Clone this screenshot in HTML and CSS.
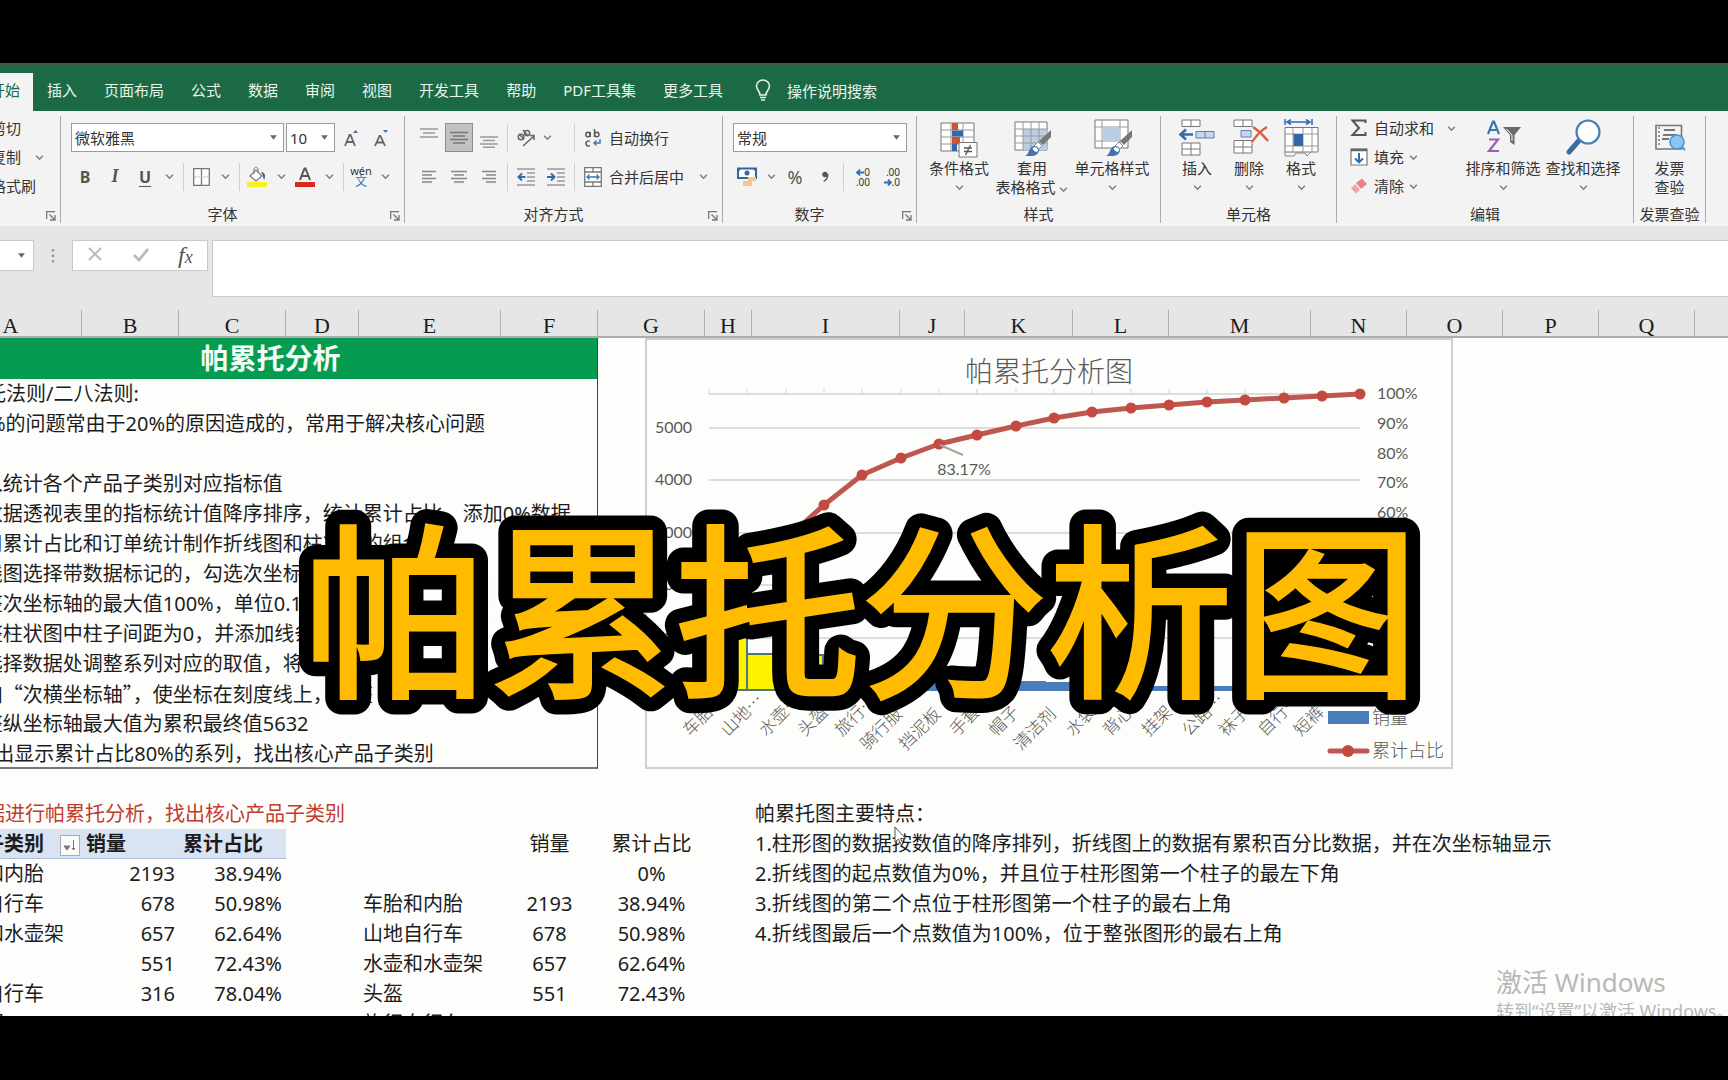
FILE: index.html
```html
<!DOCTYPE html>
<html lang="zh-CN">
<head>
<meta charset="utf-8">
<title>帕累托分析图</title>
<link rel="stylesheet" href="styles.css">
</head>
<body>
<svg class="defs" aria-hidden="true">
  <symbol id="chev" viewBox="0 0 8 6"><path d="M1 1.500 4 4.500 7 1.500" fill="none" stroke="#808080" stroke-width="1.400"/></symbol>
  <symbol id="tri" viewBox="0 0 8 6"><path d="M1 1H7L4 5Z" fill="#666"/></symbol>
  <symbol id="launch" viewBox="0 0 10 10"><path d="M.7 8V.7H9M3.500 3.500 8 8M9 4V9H4" fill="none" stroke="#777" stroke-width="1.300"/></symbol>
  <symbol id="brush" viewBox="0 0 28 28"><path d="M27 1V8L19 16 15 12Z" fill="#777"/><path d="M14 13l4 4-4 4-4-4Z" fill="#fff" stroke="#888"/><path d="M1 27C6 25 4 17 11 17c6 1 5 10-3 10Z" fill="#3f74ad"/><path d="M8 19c3-3 8 0 6 4-3 1-5-1-6-4Z" fill="#fff" stroke="#3f74ad"/></symbol>
</svg>
<div class="bar bar-top"></div>
<main class="stage">
<div class="window">
  <nav class="tabs">
    <button class="tab active">开始</button>
    <button class="tab">插入</button>
    <button class="tab">页面布局</button>
    <button class="tab">公式</button>
    <button class="tab">数据</button>
    <button class="tab">审阅</button>
    <button class="tab">视图</button>
    <button class="tab">开发工具</button>
    <button class="tab">帮助</button>
    <button class="tab">PDF工具集</button>
    <button class="tab">更多工具</button>
    <button class="tab tell"><svg width="16" height="22" viewBox="0 0 16 22"><path d="M5 16C5 12 1.500 11 1.500 7a6.500 6 0 0 1 13 0c0 4-3.500 5-3.500 9ZM5 18.500h6M6 21h4" fill="none" stroke="#e6f3ea" stroke-width="1.600"/></svg>操作说明搜索</button>
  </nav>

  <section class="ribbon">
    <div class="group g-clip">
      <div class="body stack">
        <button class="txt">剪切</button>
        <button class="txt wide">复制<svg class="cv"><use href="#chev"/></svg></button>
        <button class="txt">格式刷</button>
      </div>
      <div class="title launchable"><svg class="la"><use href="#launch"/></svg></div>
    </div>

    <div class="group g-font">
      <div class="body rows">
        <div class="row">
          <button class="combo name">微软雅黑<svg class="cv"><use href="#tri"/></svg></button>
          <button class="combo size">10<svg class="cv"><use href="#tri"/></svg></button>
          <button class="ic"><svg width="18" height="18" viewBox="0 0 18 18"><path d="M2 17 6.500 6h1L12 17M3.800 13h6.500" fill="none" stroke="#666" stroke-width="1.800"/><path d="M10 4 12.500 1 15 4Z" fill="#3f74ad"/></svg></button>
          <button class="ic"><svg width="18" height="18" viewBox="0 0 18 18"><path d="M2 17 6.500 7h1L12 17M3.800 13.500h6.500" fill="none" stroke="#666" stroke-width="1.800"/><path d="M10 1h5L12.500 4Z" fill="#3f74ad"/></svg></button>
        </div>
        <div class="row">
          <button class="ic b">B</button><button class="ic i">I</button><button class="ic u">U</button>
          <button class="dd"><svg class="cv"><use href="#chev"/></svg></button><i class="sep s1"></i>
          <button class="ic"><svg width="17" height="18" viewBox="0 0 17 18"><path d="M.7.700H16.300V17.300H.7ZM8.500 1V17" fill="#fff" stroke="#777" stroke-width="1.300"/><path d="M2 9H15" stroke="#999" stroke-dasharray="1.500 1.500"/></svg></button>
          <button class="dd"><svg class="cv"><use href="#chev"/></svg></button><i class="sep s1"></i>
          <button class="ic"><svg width="22" height="22" viewBox="0 0 22 22"><path d="M4 10 10 4l6 6-6 5Z" fill="#fff" stroke="#777" stroke-width="1.200"/><path d="M8 8V3c0-2 4-2 4 0v4" fill="none" stroke="#777"/><path d="M15 6c4 0 5 4 3 8-1-3-1-5-3-8Z" fill="#3f5f8d"/><path d="M1 16H21V21H1Z" fill="#f7f01d"/></svg></button>
          <button class="dd"><svg class="cv"><use href="#chev"/></svg></button>
          <button class="ic"><svg width="20" height="20" viewBox="0 0 20 20"><path d="M5 13 9.500 1.500h1L15 13M6.500 9h7" fill="none" stroke="#555" stroke-width="2"/><path d="M0 15H20V20H0Z" fill="#d92a1c"/></svg></button>
          <button class="dd"><svg class="cv"><use href="#chev"/></svg></button><i class="sep s1"></i>
          <button class="ic wen"><span>wén</span><span class="hanzi">文</span></button>
          <button class="dd"><svg class="cv"><use href="#chev"/></svg></button>
        </div>
      </div>
      <div class="title launchable">字体<svg class="la"><use href="#launch"/></svg></div>
    </div>

    <div class="group g-align">
      <div class="body rows">
        <div class="row">
          <button class="ic up"><svg width="18" height="10" viewBox="0 0 18 10"><path d="M0 1H18M3 5H15M0 9H18" stroke="#999" stroke-width="1.500"/></svg></button>
          <button class="ic on"><svg width="18" height="13" viewBox="0 0 18 13"><path d="M0 1.500H18M3 5H15M0 8.500H18M3 12H15" stroke="#777" stroke-width="1.400"/></svg></button>
          <button class="ic down"><svg width="18" height="12" viewBox="0 0 18 12"><path d="M0 1H18M3 4.500H15M0 8H18M3 11.300H15" stroke="#999" stroke-width="1.400"/></svg></button>
          <i class="sep"></i>
          <span class="pair"><button class="ic"><svg width="20" height="20" viewBox="0 0 20 20"><g fill="none" stroke="#666" stroke-width="1.500"><circle cx="5" cy="9" r="2.800"/><path d="M3 6 8 11M7 2l5 6"/><circle cx="11" cy="5" r="2.600"/><path d="M7 18 18 8M18 12V7.500H13.500"/></g></svg></button><button class="dd slim"><svg class="cv"><use href="#chev"/></svg></button></span>
          <i class="sep"></i>
          <button class="txt"><span class="ic"><svg width="18" height="20" viewBox="0 0 18 20"><g fill="none" stroke="#555" stroke-width="1.400"><circle cx="4" cy="6.500" r="2.200"/><path d="M6.300 4v5M10.500 1v8"/><circle cx="12.800" cy="6.500" r="2.200"/><path d="M6 13.500a2.500 2.500 0 1 0 0 4"/></g><path d="M16 11v4H10M12.500 12.500 10 15l2.500 2.500" fill="none" stroke="#3f74ad" stroke-width="1.400"/></svg></span>自动换行</button>
        </div>
        <div class="row">
          <button class="ic"><svg width="14" height="14" viewBox="0 0 14 14"><path d="M0 1.500H14M0 5H10M0 8.500H14M0 12H10" stroke="#888" stroke-width="1.400"/></svg></button>
          <button class="ic"><svg width="16" height="14" viewBox="0 0 16 14"><path d="M0 1.500H16M3 5H13M0 8.500H16M3 12H13" stroke="#888" stroke-width="1.400"/></svg></button>
          <button class="ic"><svg width="14" height="14" viewBox="0 0 14 14"><path d="M0 1.500H14M4 5H14M0 8.500H14M4 12H14" stroke="#888" stroke-width="1.400"/></svg></button>
          <i class="sep"></i>
          <button class="ic"><svg width="18" height="18" viewBox="0 0 18 18"><path d="M0 1H18M10 5H18M10 9H18M10 13H18M0 17H18" stroke="#999" stroke-width="1.400"/><path d="M8.500 9H2M5 5.500 1.500 9 5 12.500" fill="none" stroke="#2f6cb0" stroke-width="2"/></svg></button>
          <button class="ic"><svg width="18" height="18" viewBox="0 0 18 18"><path d="M0 1H18M10 5H18M10 9H18M10 13H18M0 17H18" stroke="#999" stroke-width="1.400"/><path d="M0 9H7M4 5.500 7.500 9 4 12.500" fill="none" stroke="#2f6cb0" stroke-width="2"/></svg></button>
          <i class="sep"></i>
          <button class="txt merge"><span class="ic"><svg width="18" height="20" viewBox="0 0 18 20"><path d="M.7.700H17.300V19.300H.7ZM.7 5H17.300M.7 15H17.300M9 1V5M9 15v4" fill="#fff" stroke="#777" stroke-width="1.300"/><path d="M3 10H15M5.500 7.500 3 10l2.500 2.500M12.500 7.500 15 10l-2.500 2.500" fill="none" stroke="#3f74ad" stroke-width="1.300"/></svg></span>合并后居中<svg class="cv"><use href="#chev"/></svg></button>
        </div>
      </div>
      <div class="title launchable">对齐方式<svg class="la"><use href="#launch"/></svg></div>
    </div>

    <div class="group g-num">
      <div class="body rows">
        <div class="row"><button class="combo fmt">常规<svg class="cv"><use href="#tri"/></svg></button></div>
        <div class="row">
          <button class="ic"><svg width="20" height="20" viewBox="0 0 20 20"><path d="M1 1.500H19V11H1Z" fill="#fff" stroke="#33689f" stroke-width="2"/><path d="M1 1h4L1 5ZM19 1v4l-4-4Z" fill="#33689f"/><circle cx="10" cy="6" r="2.500" fill="#33689f"/><path d="M11 10h8v4h-8ZM6 14h9v5H6Z" fill="#f6c68d"/></svg></button>
          <button class="dd"><svg class="cv"><use href="#chev"/></svg></button>
          <button class="ic pct">%</button>
          <button class="ic"><svg width="8" height="12" viewBox="0 0 8 12"><circle cx="4" cy="3.500" r="2.700" fill="#555"/><path d="M6.700 3c.3 4-1.500 6-4 7.500" fill="none" stroke="#555" stroke-width="1.400"/></svg></button>
          <i class="sep"></i>
          <button class="ic dec"><span><svg width="8" height="7" viewBox="0 0 8 7"><path d="M8 3.500H1M4 .7 1 3.500 4 6.300" fill="none" stroke="#2f6cb0" stroke-width="1.800"/></svg>0</span><span>.00</span></button>
          <button class="ic dec"><span>.00</span><span><svg width="8" height="7" viewBox="0 0 8 7"><path d="M0 3.500H7M4 .7 7 3.500 4 6.300" fill="none" stroke="#2f6cb0" stroke-width="1.800"/></svg>.0</span></button>
        </div>
      </div>
      <div class="title launchable">数字<svg class="la"><use href="#launch"/></svg></div>
    </div>

    <div class="group g-style">
      <div class="body bigs">
        <button class="big w1"><svg class="bi" viewBox="0 0 40 40"><path d="M2 4H35V32H2Z" fill="#fff" stroke="#777"/><path d="M2 11H35M2 18H35M2 25H35M12 4V32M24 4V32" stroke="#999" fill="none"/><path d="M13 4h6v7h-6ZM13 18h8v7h-8Z" fill="#d1542f"/><path d="M13 11.500H24V17.500H13ZM13 25h5v7h-5Z" fill="#3567a8"/><path d="M20 23.500H38V38H20Z" fill="#fff" stroke="#777"/><path d="M25 29h8M25 32.500h8M31.500 26 26.500 36" stroke="#555" stroke-width="1.300"/></svg><span>条件格式</span><svg class="cv"><use href="#chev"/></svg></button>
        <button class="big w2"><svg class="bi" viewBox="0 0 40 40"><path d="M3 3H35V31H3Z" fill="#fff" stroke="#777"/><path d="M11 10H35V31H11Z" fill="#bccde6"/><path d="M3 10H35M3 17H35M3 24H35M11 3V31M19 3V31M27 3V31" stroke="#999" fill="none"/><use href="#brush" x="12" y="10" width="28" height="28"/></svg><span>套用</span><span>表格格式 <svg class="cv"><use href="#chev"/></svg></span></button>
        <button class="big w3"><svg class="bi" viewBox="0 0 40 40"><path d="M3 1H36V29H3Z" fill="#fff" stroke="#777"/><path d="M3 8H36M3 22H36M10 1V29M28 1V29" stroke="#999" fill="none"/><path d="M10.500 8.500H27.500V21.500H10.500Z" fill="#bccde6"/><use href="#brush" x="13" y="10" width="28" height="28"/></svg><span>单元格样式</span><svg class="cv"><use href="#chev"/></svg></button>
      </div>
      <div class="title">样式</div>
    </div>

    <div class="group g-cell">
      <div class="body bigs">
        <button class="big w4"><svg class="bi" viewBox="0 0 40 40"><path d="M5 1H23V7.500H5ZM14 1V7.500M5 24H23V36H5ZM5 30H23M14 24V36" fill="#fff" stroke="#777"/><path d="M19 12.500H37V19H19ZM28 12.500V19" fill="#c7d6ec" stroke="#6480a8"/><path d="M16 15.500H4M9 10.500 3.500 15.500 9 20.500" fill="none" stroke="#2f6cb0" stroke-width="2.600"/></svg><span>插入</span><svg class="cv"><use href="#chev"/></svg></button>
        <button class="big w4"><svg class="bi" viewBox="0 0 40 40"><path d="M5 1H23V7.500H5ZM14 1V7.500M5 21.500H23V34H5ZM5 28H23M14 21.500V34" fill="#fff" stroke="#777"/><path d="M12 11.500H22V18H12Z" fill="#c7d6ec" stroke="#6480a8"/><path d="M24 8C30 12 35 17 39 22M38 8C31 12 27 17 23 23" fill="none" stroke="#dc5b3c" stroke-width="2.200"/></svg><span>删除</span><svg class="cv"><use href="#chev"/></svg></button>
        <button class="big w4"><svg class="bi" viewBox="0 0 40 40"><path d="M4 0V6M31 0V6M6 3H29M10 .5 6 3l4 2.500M25 .500 29 3l-4 2.500" fill="none" stroke="#2f6cb0" stroke-width="1.500"/><path d="M4 8.500H37V33H4Z" fill="#fff" stroke="#777"/><path d="M4 15H37M4 27H37M12 9V33M22 9V33M31 9V33" stroke="#999"/><path d="M12.500 15H22V27H12.500Z" fill="#3567a8"/><path d="M4 33v4h9l2-3h9l2 3 4-4" fill="none" stroke="#888"/></svg><span>格式</span><svg class="cv"><use href="#chev"/></svg></button>
      </div>
      <div class="title">单元格</div>
    </div>

    <div class="group g-edit">
      <div class="body bigs">
        <div class="stack edits">
          <button class="txt far"><svg width="18" height="18" viewBox="0 0 18 18"><path d="M15.500 4V1.500H2.500L9 9 2.500 16H15.500V13" fill="none" stroke="#555" stroke-width="2"/></svg>自动求和<svg class="cv"><use href="#chev"/></svg></button>
          <button class="txt"><svg width="18" height="18" viewBox="0 0 18 18"><path d="M1 1H17V17H1Z" fill="#fff" stroke="#777" stroke-width="1.200"/><path d="M1 2H17" stroke="#666" stroke-width="2.500"/><path d="M9 5V14M5 10.500 9 14.300 13 10.500" fill="none" stroke="#2f6cb0" stroke-width="2"/></svg>填充<svg class="cv"><use href="#chev"/></svg></button>
          <button class="txt"><svg width="18" height="18" viewBox="0 0 18 18"><path d="M6 6 12 1.500 17 7 11 12Z" fill="#e8808d"/><path d="M5 7 10 13 6 16.500 1 11.500Z" fill="#f0a3ac"/></svg>清除<svg class="cv"><use href="#chev"/></svg></button>
        </div>
        <button class="big w5"><svg class="bi" viewBox="0 0 40 40"><path d="M5 15 10 2.500h1L16 15M7 11h7" fill="none" stroke="#3a78b4" stroke-width="2.200"/><path d="M6 20.500H15L6 32H16" fill="none" stroke="#9a62b5" stroke-width="2.200"/><path d="M20 8H38L31.500 16V26L27 23V16Z" fill="#6b6b6b"/><path d="M23.500 10 29 16v6" fill="none" stroke="#fff"/></svg><span>排序和筛选</span><svg class="cv"><use href="#chev"/></svg></button>
        <button class="big w5"><svg class="bi" viewBox="0 0 40 40"><path d="M16.500 21 6 33" stroke="#3b6c9c" stroke-width="5" stroke-linecap="round"/><circle cx="25" cy="13" r="11.500" fill="#fff" stroke="#4781b8" stroke-width="2.200"/></svg><span>查找和选择</span><svg class="cv"><use href="#chev"/></svg></button>
      </div>
      <div class="title">编辑</div>
    </div>

    <div class="group g-inv">
      <div class="body bigs">
        <button class="big w6"><svg class="bi" viewBox="0 0 40 40"><path d="M6 6.500H31.500V30H6Z" fill="#f4f4f4" stroke="#777" stroke-width="1.600"/><path d="M9 8v20" stroke="#777" stroke-width="1.500" stroke-dasharray="2 2"/><path d="M14 11H25M13 16H27M12 20H19" stroke="#777" stroke-width="1.800"/><circle cx="27" cy="23" r="7" fill="#8ec4f2" stroke="#4b95d4" stroke-width="1.600"/><path d="m32 28 3 3" stroke="#4b95d4" stroke-width="2"/></svg><span>发票</span><span>查验</span></button>
      </div>
      <div class="title">发票查验</div>
    </div>
  </section>

  <section class="formula">
    <button class="namebox" aria-label="名称框"><svg class="cv"><use href="#tri"/></svg></button>
    <svg class="dots" width="4" height="16" viewBox="0 0 4 16"><path d="M2 1V15" stroke="#999" stroke-width="2.500" stroke-dasharray="2.500 3"/></svg>
    <div class="fx">
      <button aria-label="取消"><svg width="16" height="16" viewBox="0 0 16 16"><path d="M2 2 14 14M14 2 2 14" stroke="#bbb" stroke-width="2"/></svg></button>
      <button aria-label="输入"><svg width="18" height="16" viewBox="0 0 18 16"><path d="M2 9 7 14 16 3" fill="none" stroke="#bbb" stroke-width="2.800"/></svg></button>
      <button class="fn"><span>f</span>x</button>
    </div>
    <input class="finput" aria-label="编辑栏">
  </section>

  <div class="cols"><span>A</span><span>B</span><span>C</span><span>D</span><span>E</span><span>F</span><span>G</span><span>H</span><span>I</span><span>J</span><span>K</span><span>L</span><span>M</span><span>N</span><span>O</span><span>P</span><span>Q</span><span></span></div>

  <section class="sheet">
    <div class="upper">
      <div class="panel">
        <h1>帕累托分析</h1>
        <p>帕累托法则/二八法则:</p>
        <p>即80%的问题常由于20%的原因造成的，常用于解决核心问题</p>
        <p></p>
        <p>1.插入统计各个产品子类别对应指标值</p>
        <p>2.对数据透视表里的指标统计值降序排序，统计累计占比，添加0%数据</p>
        <p>3.利用累计占比和订单统计制作折线图和柱状图的组合图</p>
        <p>4.折线图选择带数据标记的，勾选次坐标轴</p>
        <p>5.调整次坐标轴的最大值100%，单位0.1</p>
        <p>6.调整柱状图中柱子间距为0，并添加线条</p>
        <p>7.在选择数据处调整系列对应的取值，将折线图取值</p>
        <p>8.添加<span class="q">“</span>次横坐标轴<span class="q">”</span>，使坐标在刻度线上，调整</p>
        <p>9.调整纵坐标轴最大值为累积最终值5632</p>
        <p>10.突出显示累计占比80%的系列，找出核心产品子类别</p>
      </div>
      <svg class="chart" viewBox="646 339 807 430" role="img" aria-label="帕累托分析图">
        <rect x="646" y="339" width="806" height="429" fill="#fdfefc" stroke="#cfcfcf" stroke-width="2"/>
        <path d="M709 394H1360M709 428H1360M709 480H1360M709 533H1360M709 585H1360M709 638H1360" stroke="#dcdcdc" stroke-width="2"/>
        <path d="M709 389v5M747 389v5M786 389v5M824 389v5M862 389v5M901 389v5M939 389v5M977 389v5M1016 389v5M1054 389v5M1092 389v5M1131 389v5M1169 389v5M1207 389v5M1245 389v5M1284 389v5M1322 389v5" stroke="#cfd3d6"/>
        <path d="M709 575H747V690H709ZM747 654H785V690H747ZM785 655H823V690H785Z" fill="#fff200" stroke="#4a7a78" stroke-width="2"/>
        <path d="M823 661H862V673H901V675H939V681H1046V682H1092V684H1131V686H1245V688H1360V691H823Z" fill="#4a7ebb"/>
        <path d="M709 690 747 574 786 539 824 505 862 475 901 458 939 444 977 435 1016 426 1054 418 1092 412 1131 408 1169 405 1207 402 1245 400 1284 398 1322 396 1360 394" fill="none" stroke="#bd5750" stroke-width="5" stroke-linejoin="round"/>
        <g fill="#c24a40"><circle cx="709" cy="690" r="5.500"/><circle cx="747" cy="574" r="5.500"/><circle cx="786" cy="539" r="5.500"/><circle cx="824" cy="505" r="5.500"/><circle cx="862" cy="475" r="5.500"/><circle cx="901" cy="458" r="5.500"/><circle cx="939" cy="444" r="5.500"/><circle cx="977" cy="435" r="5.500"/><circle cx="1016" cy="426" r="5.500"/><circle cx="1054" cy="418" r="5.500"/><circle cx="1092" cy="412" r="5.500"/><circle cx="1131" cy="408" r="5.500"/><circle cx="1169" cy="405" r="5.500"/><circle cx="1207" cy="402" r="5.500"/><circle cx="1245" cy="400" r="5.500"/><circle cx="1284" cy="398" r="5.500"/><circle cx="1322" cy="396" r="5.500"/><circle cx="1360" cy="394" r="5.500"/></g>
        <path d="M940 445 963 455" stroke="#a9a29c" stroke-width="2"/>
        <text class="ct" x="1049" y="382" text-anchor="middle">帕累托分析图</text>
        <g class="num" text-anchor="end"><text x="692" y="433">5000</text><text x="692" y="485">4000</text><text x="692" y="538">3000</text><text x="692" y="590">2000</text><text x="692" y="643">1000</text><text x="692" y="696">0</text></g>
        <g class="num"><text x="1377" y="399">100%</text><text x="1377" y="429">90%</text><text x="1377" y="459">80%</text><text x="1377" y="488">70%</text><text x="1377" y="518">60%</text></g>
        <text class="num" x="964" y="475" text-anchor="middle">83.17%</text>
        <g class="cat">
          <text transform="translate(690 737) rotate(-45)">车胎…</text><text transform="translate(728 737) rotate(-45)">山地…</text><text transform="translate(766 737) rotate(-45)">水壶…</text><text transform="translate(805 737) rotate(-45)">头盔</text><text transform="translate(842 737) rotate(-45)">旅行…</text><text transform="translate(867 751) rotate(-45)">骑行服</text><text transform="translate(906 751) rotate(-45)">挡泥板</text><text transform="translate(957 737) rotate(-45)">手套</text><text transform="translate(996 737) rotate(-45)">帽子</text><text transform="translate(1021 751) rotate(-45)">清洁剂</text><text transform="translate(1073 737) rotate(-45)">水袋</text><text transform="translate(1110 737) rotate(-45)">背心</text><text transform="translate(1149 737) rotate(-45)">挂架</text><text transform="translate(1189 737) rotate(-45)">公路…</text><text transform="translate(1226 737) rotate(-45)">袜子</text><text transform="translate(1265 737) rotate(-45)">自行…</text><text transform="translate(1301 737) rotate(-45)">短裤</text>
        </g>
        <path d="M1328 711H1369V724H1328Z" fill="#4a7ebb"/>
        <path d="M1330 751H1367" stroke="#bd5750" stroke-width="5" stroke-linecap="round"/><circle cx="1348" cy="751" r="6" fill="#c24a40"/>
        <g class="leg"><text x="1372" y="724">销量</text><text x="1372" y="757">累计占比</text></g>
      </svg>
    </div>

    <div class="lower">
      <div class="pivot">
        <p class="red">对数据进行帕累托分析，找出核心产品子类别</p>
        <table>
          <thead><tr><th class="ca"><span class="hd">产品子类别<button class="filter" aria-label="排序"><svg width="14" height="12" viewBox="0 0 14 12"><path d="M1 6H7L4 10ZM10.500 0V10M9 8l1.500 2L12 8" fill="#777" stroke="#777"/></svg></button></span></th><th class="cb">销量</th><th class="cc">累计占比</th></tr></thead>
          <tbody>
            <tr><td>车胎和内胎</td><td>2193</td><td>38.94%</td></tr>
            <tr><td>山地自行车</td><td>678</td><td>50.98%</td></tr>
            <tr><td>水壶和水壶架</td><td>657</td><td>62.64%</td></tr>
            <tr><td>头盔</td><td>551</td><td>72.43%</td></tr>
            <tr><td>旅行自行车</td><td>316</td><td>78.04%</td></tr>
            <tr><td>骑行服</td><td>289</td><td>83.17%</td></tr>
          </tbody>
        </table>
      </div>
      <table class="calc">
        <thead><tr><th class="ca"></th><th class="cb">销量</th><th class="cc">累计占比</th></tr></thead>
        <tbody>
          <tr><td></td><td></td><td>0%</td></tr>
          <tr><td>车胎和内胎</td><td>2193</td><td>38.94%</td></tr>
          <tr><td>山地自行车</td><td>678</td><td>50.98%</td></tr>
          <tr><td>水壶和水壶架</td><td>657</td><td>62.64%</td></tr>
          <tr><td>头盔</td><td>551</td><td>72.43%</td></tr>
          <tr><td>旅行自行车</td><td>316</td><td>78.04%</td></tr>
        </tbody>
      </table>
      <div class="notes">
        <p>帕累托图主要特点：</p>
        <p>1.柱形图的数据按数值的降序排列，折线图上的数据有累积百分比数据，并在次坐标轴显示</p>
        <p>2.折线图的起点数值为0%，并且位于柱形图第一个柱子的最左下角</p>
        <p>3.折线图的第二个点位于柱形图第一个柱子的最右上角</p>
        <p>4.折线图最后一个点数值为100%，位于整张图形的最右上角</p>
        <svg class="cursor" width="13" height="20" viewBox="0 0 13 20"><path d="M1 1V16L4.500 13 7 18.500 9 17.500 6.500 12.500H11.500Z" fill="#fff" stroke="#555"/></svg>
      </div>
    </div>
  </section>
</div>
<div class="watermark"><div class="wm1">激活 Windows</div><div class="wm2">转到“设置”以激活 Windows。</div></div>
<svg class="caption" viewBox="0 0 1160 240" width="1160" height="240">
  <g class="outline"><text id="cap" x="577" y="183" text-anchor="middle">帕累托分析图</text></g>
  <g class="face"><use href="#cap"/></g>
</svg>
</main>
<div class="bar bar-bottom"></div>
</body>
</html>
```
FILE: styles.css
```css
* { box-sizing: border-box; }
html, body { margin: 0; height: 100%; }
body {
  display: flex; flex-direction: column;
  background: #000; color: #1c1c1c;
  font-family: "Noto Sans", "Noto Sans CJK SC", sans-serif;
  overflow: hidden;
}
h1, p { margin: 0; }
button { font: inherit; color: inherit; background: none; border: 0; padding: 0; margin: 0; }
.defs { position: absolute; width: 0; height: 0; }
.bar { flex: none; background: #000; }
.bar-top { height: 63px; }
.bar-bottom { height: 64px; }
.stage { position: relative; flex: 1; min-height: 0; overflow: hidden; background: #fdfefc; }

/* The window is scrolled a little past the left edge of the frame */
.window { margin-left: -60px; }

.tabs { display: flex; align-items: flex-end; height: 48px; padding-left: 36px; background: #1c6a45; font-size: 15px; color: #eaf5ee; border-top: 2px solid #3f5a4c; white-space: nowrap; }
.tab { height: 38px; padding: 0 13px 6px 14px; }
.tab.active { background: #f3f3f3; color: #1c6a45; }
.tell { display: flex; align-items: center; gap: 16px; padding-left: 19px; padding-bottom: 4px; }

.ribbon { display: flex; height: 115px; padding: 5px 0 3px; background: #f3f3f3; color: #333; font-size: 15px; white-space: nowrap; line-height: 20px; }
.group { flex: none; display: flex; flex-direction: column; justify-content: space-between; border-right: 1px solid #ababab; }
.g-clip { width: 121px; } .g-font { width: 344px; } .g-align { width: 318px; } .g-num { width: 194px; }
.g-style { width: 244px; } .g-cell { width: 176px; } .g-edit { width: 297px; } .g-inv { width: 72px; }
.title { position: relative; height: 18px; line-height: 18px; text-align: center; }
.launchable { padding-right: 20px; }
.la { position: absolute; right: 4px; bottom: 2px; width: 10px; height: 10px; }
.cv { width: 9px; height: 7px; flex: none; }
.rows { padding: 7px 9px 0; display: flex; flex-direction: column; gap: 10px; }
.row { display: flex; align-items: center; height: 29px; }
.ic { flex: none; width: 30px; height: 28px; display: flex; align-items: center; justify-content: center; }
.dd { flex: none; width: 18px; height: 28px; display: flex; align-items: center; justify-content: center; }
.dd.slim { width: 12px; }
.pair { display: flex; width: 60px; }
.sep { flex: none; width: 1px; height: 28px; background: #d0d0d0; margin: 0 3px; }
.sep.s1 { margin: 0 2px 0 5px; }
.combo { flex: none; display: flex; align-items: center; justify-content: space-between; height: 29px; padding: 0 5px 0 3px; border: 1px solid #9b9b9b; background: #fff; }
.name { width: 213px; margin: 0 2px 0 1px; } .size { width: 49px; margin-right: 2px; } .fmt { width: 174px; margin-left: 1px; }
.b { font-size: 16px; font-weight: 700; color: #555; } .i { font: italic 700 18px "Liberation Serif", serif; color: #555; }
.u { font-size: 16px; font-weight: 700; text-decoration: underline; text-underline-offset: 3px; color: #555; }
.wen { flex-direction: column; font-size: 11px; line-height: 10px; } .hanzi { color: #3f74ad; font-size: 12px; line-height: 12px; }
.on { background: #c2c2c2; border: 1px solid #8d8d8d; height: 29px; width: 28px; margin: 0 1px; }
.up { align-items: flex-start; padding-top: 4px; } .down { align-items: flex-end; padding-bottom: 4px; }
.txt { display: flex; align-items: center; gap: 2px; }
.g-align .txt { gap: 1px; }
.merge .cv { margin-left: 14px; }
.pct { font-size: 18px; color: #555; }
.dec { flex-direction: column; align-items: flex-end; padding-right: 7px; font-size: 10px; line-height: 10px; }

.stack { display: flex; flex-direction: column; gap: 9px; padding-top: 2px; }
.g-clip .stack { padding-left: 51px; }
.wide { gap: 14px; }
.bigs { display: flex; }
.g-style .bigs { padding-left: 8px; } .g-cell .bigs { padding-left: 10px; } .g-edit .bigs { padding-left: 13px; }
.edits { width: 113px; }
.edits .txt { gap: 5px; } .edits .txt > svg:first-child { margin-right: 1px; } .far .cv { margin-left: 8px; }
.big { display: flex; flex-direction: column; align-items: center; padding-top: 3px; line-height: 19px; }
.bi { width: 40px; height: 40px; }
.big > .cv { margin-top: 6px; }
.w1 { width: 68px; } .w2 { width: 78px; } .w3 { width: 82px; } .w4 { width: 52px; } .w5 { width: 80px; } .w6 { width: 71px; }

.formula { display: flex; align-items: flex-start; height: 84px; padding-top: 14px; background: #e6e6e6; }
.namebox { width: 94px; height: 31px; display: flex; align-items: center; justify-content: flex-end; padding-right: 7px; background: #fff; border: 1px solid #c9c9c9; }
.dots { margin: 8px 17px 0; }
.fx { display: flex; align-items: center; justify-content: space-around; width: 136px; height: 31px; background: #fff; border: 1px solid #c9c9c9; }
.fn { font: italic 18px "Liberation Serif", serif; color: #555; } .fn span { font-size: 24px; }
.finput { flex: 1; height: 57px; margin-left: 4px; background: #fff; border: 1px solid #c9c9c9; border-right: 0; }

.cols {
  display: grid; grid-template-columns: 142px 97px 107px 73px 142px 97px 107px 47px 148px 65px 108px 96px 142px 96px 96px 96px 96px 1fr;
  height: 28px; background: #e6e6e6; border-bottom: 2px solid #adadad;
  font: 22px/31px "Liberation Serif", serif; text-align: center;
}
.cols span { height: 26px; border-right: 1px solid #b0b0b0; }
.cols span:last-child { border-right: 0; }

.sheet { font-size: 20px; line-height: 30px; white-space: nowrap; color: #1c1c1c; }
.upper { display: flex; height: 431px; }
.panel { flex: none; width: 658px; border-right: 1px solid #444; border-bottom: 2px solid #777; }
.panel h1 { height: 41px; line-height: 40px; padding-left: 4px; font-size: 28px; font-weight: 700; text-align: center; color: #f2fbf4; background: #059b50; }
.panel p { height: 30px; padding-left: 6px; }
.q { font-family: "Noto Sans CJK SC", sans-serif; }
.chart { flex: none; width: 807px; height: 430px; margin: 1px 0 0 48px; overflow: visible; }
.chart text { font-family: Lato, "Noto Sans CJK SC", sans-serif; fill: #595959; }
.chart .ct { font-size: 28px; font-weight: 300; }
.chart .num { font-size: 16px; }
.chart .cat text { font-family: "Noto Sans CJK SC", sans-serif; font-size: 17px; font-weight: 300; }
.chart .leg text { font-size: 18px; font-weight: 300; }

.lower { display: flex; align-items: flex-start; padding-top: 30px; }
.red { color: #c23a2a; padding-left: 5px; height: 30px; }
.pivot { flex: none; width: 346px; }
table { border-collapse: collapse; table-layout: fixed; width: 346px; }
th, td { height: 30px; line-height: 29px; padding: 0 4px 1px; font-weight: 400; text-align: left; }
.ca { width: 142px; } .cb { width: 97px; } .cc { width: 107px; }
.pivot thead { background: #d9e3f2; }
.pivot th { font-weight: 700; box-shadow: inset 0 -1px #a9bbd6; }
.pivot td:not(:first-child) { text-align: right; }
.hd { display: flex; align-items: center; justify-content: space-between; margin-right: -2px; }
.filter { width: 20px; height: 21px; margin-top: 4px; border: 1px solid #aaa; background: #fafafa; display: flex; align-items: center; justify-content: center; }
.calc { flex: none; margin: 30px 0 0 73px; }
.calc th:not(:first-child), .calc td:not(:first-child) { text-align: center; }
.notes { position: relative; margin-left: 50px; }
.cursor { position: absolute; left: 139px; top: 27px; }

.watermark { position: absolute; right: 4px; bottom: -7px; width: 228px; color: #b8b8b8; white-space: nowrap; }
.wm1 { font-size: 26px; line-height: 34px; }
.wm2 { font-size: 18px; line-height: 24px; }

.caption { position: absolute; top: 437px; left: 50%; margin-left: -580px; font: 400 186px "Noto Sans CJK SC", sans-serif; stroke-linejoin: round; }
.outline { fill: #000; stroke: #000; stroke-width: 33px; }
.face { fill: #ffbb00; stroke: #ffbb00; stroke-width: 4px; stroke-linejoin: miter; }
```
